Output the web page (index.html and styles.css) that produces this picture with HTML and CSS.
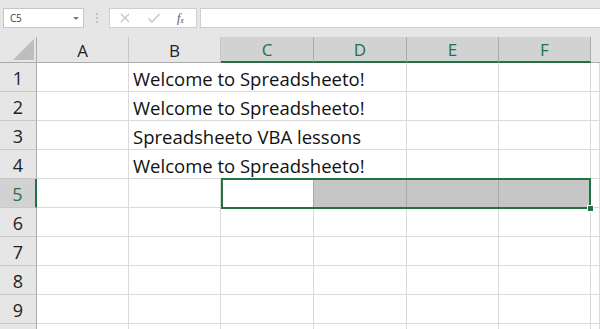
FILE: index.html
```html
<!DOCTYPE html>
<html>
<head>
<meta charset="utf-8">
<link rel="stylesheet" href="styles.css">
</head>
<body>
<div class="app">
  <div class="toolbar">
    <div class="namebox">
      <span class="ref">C5</span>
      <span class="caret"></span>
    </div>
    <div class="grip"><i></i><i></i><i></i></div>
    <div class="fxbox">
      <svg class="ico" width="12" height="12" viewBox="0 0 12 12"><path d="M2 2 L10 10 M10 2 L2 10" stroke="#c4c4c4" stroke-width="1.2" fill="none"/></svg>
      <svg class="ico" width="14" height="12" viewBox="0 0 14 12"><path d="M1.5 6.5 L5 10 L12.5 2" stroke="#c4c4c4" stroke-width="1.4" fill="none"/></svg>
      <span class="fx">f<sub>x</sub></span>
    </div>
    <div class="formula"></div>
  </div>

  <div class="sheet">
    <div class="corner"><span class="tri"></span></div>
    <div class="colhead">A</div>
    <div class="colhead">B</div>
    <div class="colhead sel">C</div>
    <div class="colhead sel">D</div>
    <div class="colhead sel">E</div>
    <div class="colhead sel">F</div>
    <div class="colhead rest"></div>

    <div class="rowhead">1</div>
    <div class="cell"></div>
    <div class="cell wide">Welcome to Spreadsheeto!</div>
    <div class="cell"></div>
    <div class="cell"></div>
    <div class="cell"></div>

    <div class="rowhead">2</div>
    <div class="cell"></div>
    <div class="cell wide">Welcome to Spreadsheeto!</div>
    <div class="cell"></div>
    <div class="cell"></div>
    <div class="cell"></div>

    <div class="rowhead">3</div>
    <div class="cell"></div>
    <div class="cell wide">Spreadsheeto VBA lessons</div>
    <div class="cell"></div>
    <div class="cell"></div>
    <div class="cell"></div>

    <div class="rowhead">4</div>
    <div class="cell"></div>
    <div class="cell wide">Welcome to Spreadsheeto!</div>
    <div class="cell"></div>
    <div class="cell"></div>
    <div class="cell"></div>

    <div class="rowhead sel">5</div>
    <div class="cell"></div>
    <div class="cell"></div>
    <div class="cell active r5 c-c"></div>
    <div class="cell range r5 c-d"></div>
    <div class="cell range r5 c-e"></div>
    <div class="cell range r5 c-f"></div>
    <div class="cell r5 c-g"></div>
    <div class="selection"><span class="handle"></span></div>

    <div class="rowhead">6</div>
    <div class="cell"></div><div class="cell"></div><div class="cell"></div><div class="cell"></div><div class="cell"></div><div class="cell"></div><div class="cell"></div>

    <div class="rowhead">7</div>
    <div class="cell"></div><div class="cell"></div><div class="cell"></div><div class="cell"></div><div class="cell"></div><div class="cell"></div><div class="cell"></div>

    <div class="rowhead">8</div>
    <div class="cell"></div><div class="cell"></div><div class="cell"></div><div class="cell"></div><div class="cell"></div><div class="cell"></div><div class="cell"></div>

    <div class="rowhead">9</div>
    <div class="cell"></div><div class="cell"></div><div class="cell"></div><div class="cell"></div><div class="cell"></div><div class="cell"></div><div class="cell"></div>

    <div class="rowhead"></div>
    <div class="cell"></div><div class="cell"></div><div class="cell"></div><div class="cell"></div><div class="cell"></div><div class="cell"></div><div class="cell"></div>
  </div>
</div>
</body>
</html>
```

FILE: styles.css
```css
* { box-sizing: border-box; }
html, body { margin: 0; padding: 0; }
body {
  width: 600px;
  height: 329px;
  overflow: hidden;
  background: #ffffff;
  font-family: "Open Sans", "Liberation Sans", sans-serif;
}
.app { width: 600px; height: 329px; overflow: hidden; }

.toolbar {
  height: 37px;
  background: #e6e6e6;
  display: flex;
  align-items: flex-start;
  padding: 8px 0 0 3px;
}
.namebox {
  width: 81px;
  height: 20px;
  background: #fff;
  border: 1px solid #c6c6c6;
  display: flex;
  align-items: center;
  justify-content: space-between;
  padding: 0 4px 0 6px;
}
.ref { font-size: 10px; color: #444; letter-spacing: -0.3px; }
.caret {
  width: 0; height: 0;
  border-left: 3px solid transparent;
  border-right: 3px solid transparent;
  border-top: 3px solid #7a7a7a;
}
.grip {
  width: 25px;
  height: 20px;
  display: flex;
  flex-direction: column;
  align-items: center;
  justify-content: center;
  gap: 2px;
}
.grip i { display: block; width: 2px; height: 2px; background: #c2c2c2; }
.fxbox {
  width: 88px;
  height: 20px;
  background: #fff;
  border: 1px solid #cfcfcf;
  display: flex;
  align-items: center;
  padding: 0 0 0 9px;
  gap: 16px;
}
.ico { display: block; }
.fx {
  font-family: "Liberation Serif", serif;
  font-style: italic;
  font-size: 12px;
  color: #555;
}
.fx sub { font-size: 8px; vertical-align: -1px; }
.formula {
  flex: 1;
  height: 20px;
  margin-left: 3px;
  background: #fff;
  border: 1px solid #cfcfcf;
  border-right: none;
}

.sheet {
  display: grid;
  grid-template-columns: 37px 92px 92px 93px 93px 92px 92px 1fr;
  grid-template-rows: 26px repeat(10, 29px);
}

.corner {
  background: #e6e6e6;
  border-right: 1px solid #ababab;
  border-bottom: 1px solid #ababab;
  position: relative;
}
.tri {
  position: absolute;
  right: 2px;
  bottom: 2px;
  width: 0; height: 0;
  border-left: 21px solid transparent;
  border-bottom: 21px solid #bdbdbd;
}
.colhead {
  background: #e6e6e6;
  border-right: 1px solid #c8c8c8;
  border-bottom: 1px solid #ababab;
  display: flex;
  align-items: center;
  justify-content: center;
  font-size: 17px;
  color: #222;
  padding-top: 1px;
}
.colhead.sel {
  background: #d2d2d2;
  color: #217346;
  border-right-color: #ababab;
  border-bottom: 2px solid #217346;
}
.colhead.rest { border-right: none; }

.rowhead {
  background: #e6e6e6;
  border-right: 1px solid #ababab;
  border-bottom: 1px solid #c8c8c8;
  display: flex;
  align-items: center;
  justify-content: center;
  font-size: 18px;
  color: #222;
  padding-top: 1px;
}
.rowhead.sel {
  background: #d2d2d2;
  color: #217346;
  border-right: 2px solid #217346;
}

.cell {
  border-right: 1px solid #dadada;
  border-bottom: 1px solid #dadada;
  font-size: 18.5px;
  line-height: 24px;
  color: #111;
  white-space: nowrap;
  display: flex;
  align-items: flex-end;
  padding: 0 0 0 4px;
}
.cell.wide { grid-column: span 3; }
.r5 { grid-row: 6; }
.c-c { grid-column: 4; }
.c-d { grid-column: 5; }
.c-e { grid-column: 6; }
.c-f { grid-column: 7; }
.c-g { grid-column: 8; }
.cell.range {
  background: #c6c6c6;
  border-right-color: #a9a9a9;
  border-bottom-color: #c6c6c6;
}
.cell.active { border-right-color: #a9a9a9; }

.selection {
  grid-column: 4 / 8;
  grid-row: 6;
  margin: -1px 0 -1px 0;
  border: 2px solid #217346;
  position: relative;
  pointer-events: none;
}
.handle {
  position: absolute;
  right: -5px;
  bottom: -5px;
  width: 7px;
  height: 7px;
  background: #217346;
  border: 1px solid #fff;
}
```
